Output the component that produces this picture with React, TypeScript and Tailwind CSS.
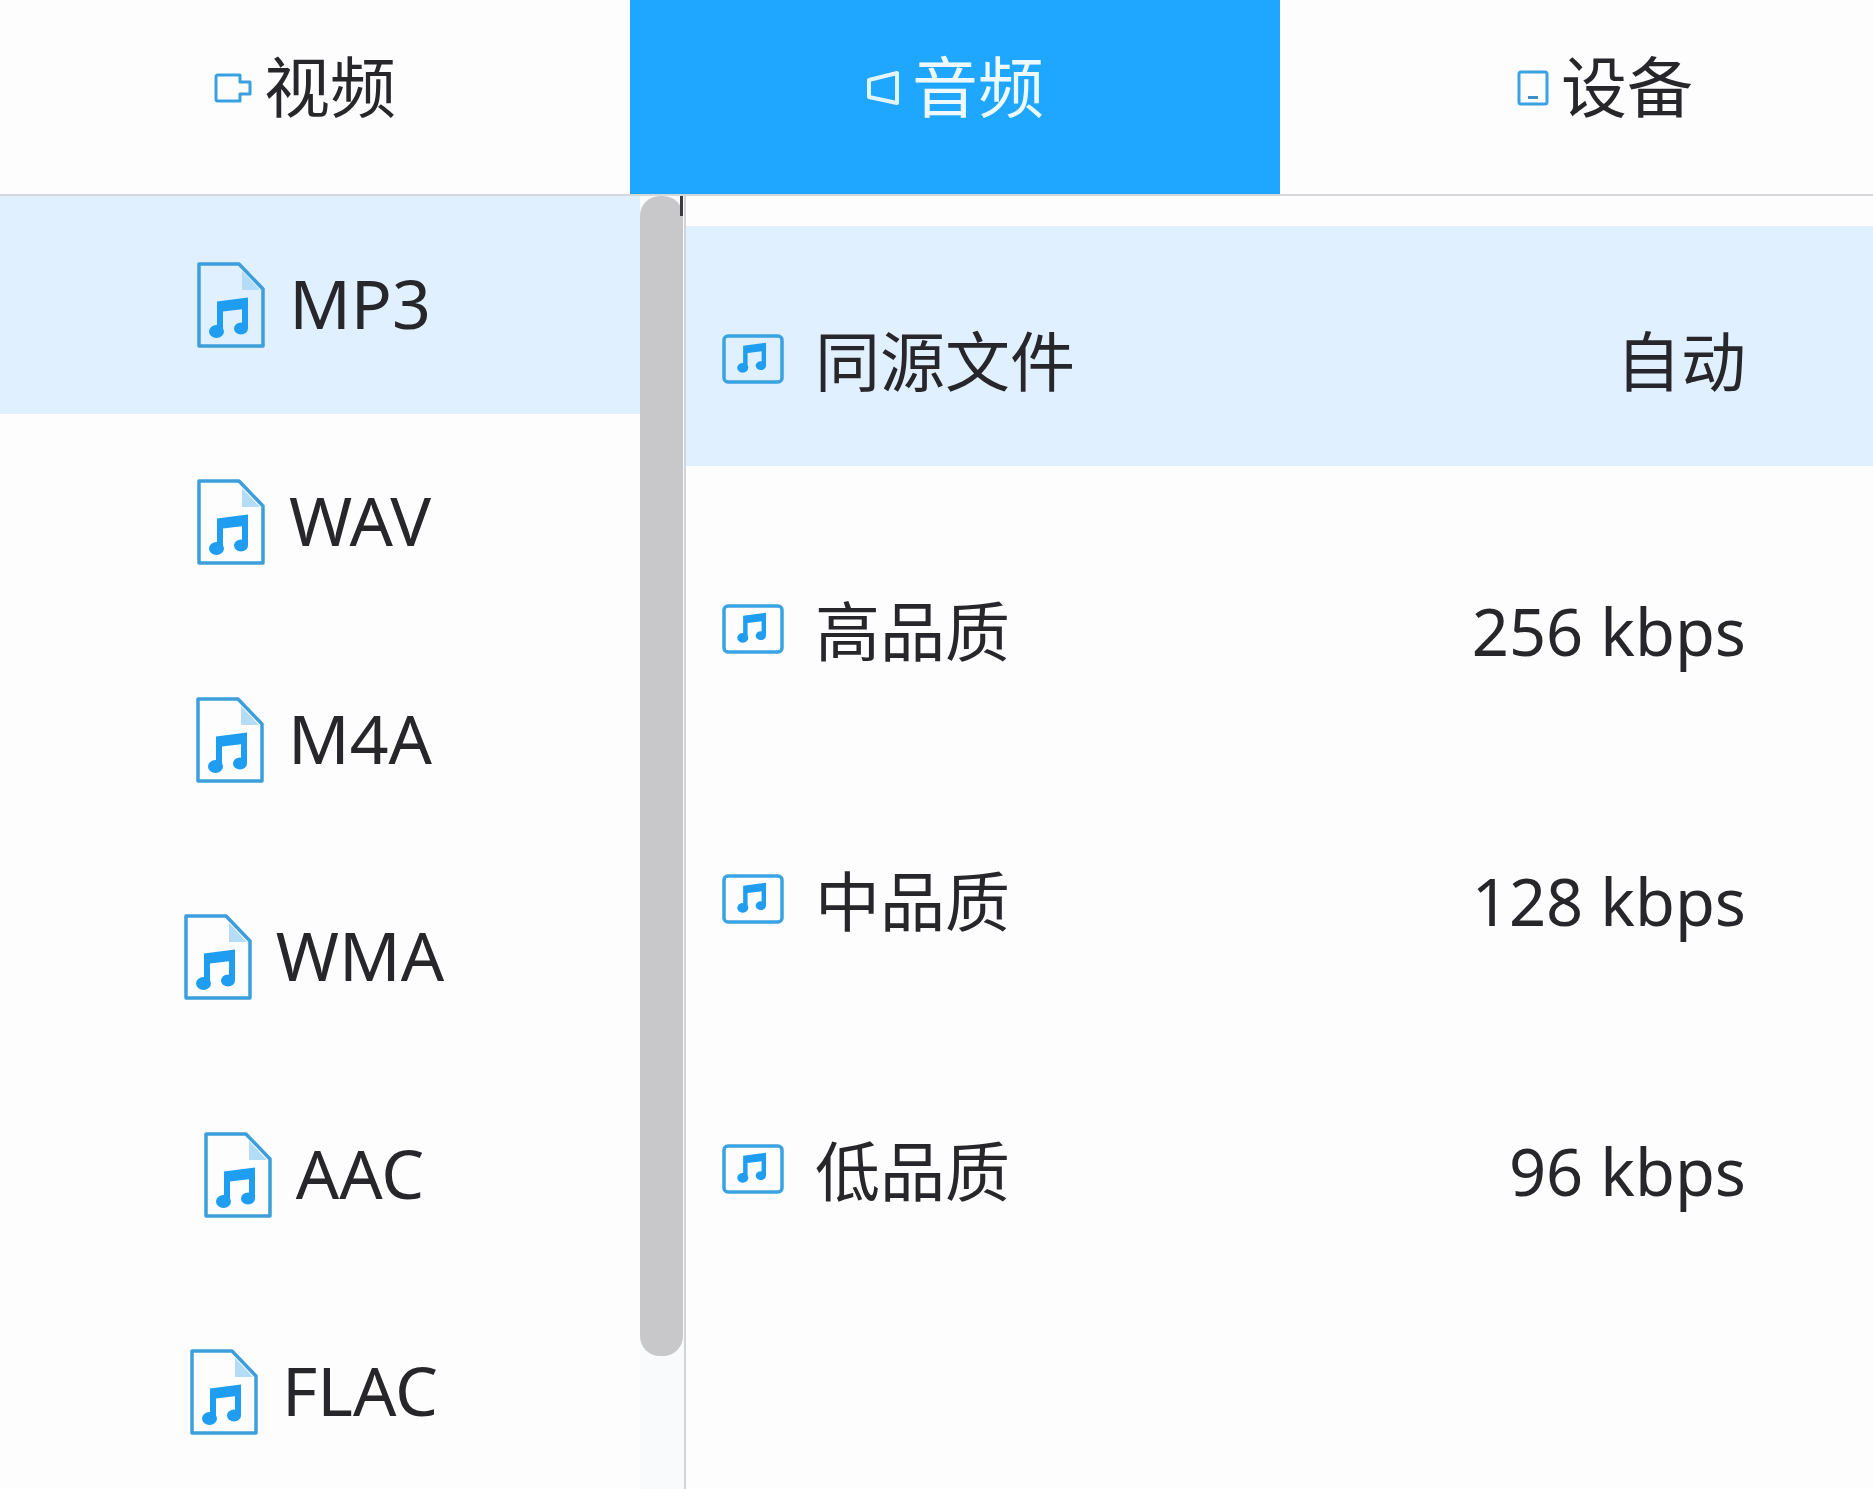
const font = "[font-family:'Noto_Sans','Noto_Sans_CJK_SC',sans-serif]";

const formats = ["MP3", "WAV", "M4A", "WMA", "AAC", "FLAC"];
const qualities = [
  { name: "同源文件", value: "自动" },
  { name: "高品质", value: "256 kbps" },
  { name: "中品质", value: "128 kbps" },
  { name: "低品质", value: "96 kbps" },
];

const Note = ({ x, y, width, height }: { x: number; y: number; width: number; height: number }) => (
  <svg x={x} y={y} width={width} height={height} viewBox="0 0 40 42">
    <path d="M8 5 L39 1 V12 L14 15 V35 H8 Z" fill="#1e9df1" />
    <rect x="33" y="4" width="6" height="28" fill="#1e9df1" />
    <ellipse cx="7.5" cy="35" rx="7.5" ry="6.5" fill="#1e9df1" />
    <ellipse cx="32" cy="32" rx="7" ry="6" fill="#1e9df1" />
  </svg>
);

const FileIcon = () => (
  <svg width="68" height="86" viewBox="0 0 68 86" className="shrink-0">
    <path d="M45 9 L63 28 H45 Z" fill="#b5dcf6" />
    <path d="M2 2 H42 L66 27 V84 H2 Z" fill="none" stroke="#3c9fdc" strokeWidth="3.5" strokeLinejoin="round" />
    <Note x={12} y={34} width={40} height={43} />
  </svg>
);

const RowIcon = () => (
  <svg width="62" height="50" viewBox="0 0 62 50" className="shrink-0">
    <rect x="2" y="2" width="58" height="46" rx="4" fill="none" stroke="#3aa3e4" strokeWidth="3.5" />
    <Note x={15} y={8} width={30} height={31} />
  </svg>
);

const VideoIcon = () => (
  <svg width="38" height="30" viewBox="0 0 38 30" className="shrink-0">
    <path d="M2 4 Q2 2 4 2 H26 V9 H36 V21 H26 V28 H4 Q2 28 2 26 Z" fill="none" stroke="#3a9fdf" strokeWidth="3" strokeLinejoin="round" />
  </svg>
);

const AudioIcon = () => (
  <svg width="34" height="36" viewBox="0 0 34 36" className="shrink-0">
    <path d="M3 10 L31 3 V33 L3 27 Z" fill="none" stroke="#e2f5ff" strokeWidth="4" strokeLinejoin="round" />
  </svg>
);

const DeviceIcon = () => (
  <svg width="32" height="36" viewBox="0 0 32 36" className="shrink-0">
    <rect x="2" y="2" width="28" height="32" rx="2" fill="none" stroke="#3aa3e4" strokeWidth="3" />
    <rect x="11" y="26" width="10" height="3" fill="#3a8fc9" />
  </svg>
);

const tabs = [
  { label: "视频", icon: <VideoIcon />, active: false },
  { label: "音频", icon: <AudioIcon />, active: true },
  { label: "设备", icon: <DeviceIcon />, active: false },
];

export default function App() {
  return (
    <div className={`w-[1873px] h-[1489px] overflow-hidden bg-[#fdfdfe] text-[#26262b] ${font}`}>
      {/* Tabs */}
      <div className="w-[1950px] -ml-[20px] h-[196px] grid grid-cols-3 border-b-2 border-[#d6d7da]">
        {tabs.map((tab) => (
          <div
            key={tab.label}
            className={`flex items-center justify-center gap-[12px] pb-[18px] text-[66px] ${
              tab.active ? "bg-[#1fa6ff] text-[#eef9ff]" : ""
            }`}
          >
            {tab.icon}
            <span className="mb-[3px]">{tab.label}</span>
          </div>
        ))}
      </div>

      <div className="flex h-[1293px]">
        {/* Format list */}
        <div className="w-[640px] shrink-0 overflow-hidden">
          {formats.map((name, i) => (
            <div
              key={name}
              className={`h-[217.5px] pr-[12px] flex items-center justify-center gap-[24px] text-[68px] ${
                i === 0 ? "bg-[#e0f0fe]" : ""
              }`}
            >
              <FileIcon />
              <span className="mb-[4px]">{name}</span>
            </div>
          ))}
        </div>

        {/* Scrollbar */}
        <div className="relative w-[46px] shrink-0 pr-[2px] border-r-2 border-[#d3d4d8] bg-[#f9fafb]">
          <div className="w-[43px] h-[1160px] rounded-[20px] bg-[#c8c8cb]" />
          <div className="absolute top-0 right-[1px] w-[3px] h-[20px] bg-[#3a3a40]" />
        </div>

        {/* Quality rows */}
        <div className="flex-1 pt-[30px] flex flex-col gap-[30px] text-[65px]">
          {qualities.map((row, i) => (
            <div
              key={row.name}
              className={`h-[240px] pt-[32px] pl-[36px] pr-[127px] flex items-center ${
                i === 0 ? "bg-[#e0f0fe]" : ""
              }`}
            >
              <div className="mb-[6px]">
                <RowIcon />
              </div>
              <span className="ml-[31px]">{row.name}</span>
              <span className="ml-auto">{row.value}</span>
            </div>
          ))}
        </div>
      </div>
    </div>
  );
}
